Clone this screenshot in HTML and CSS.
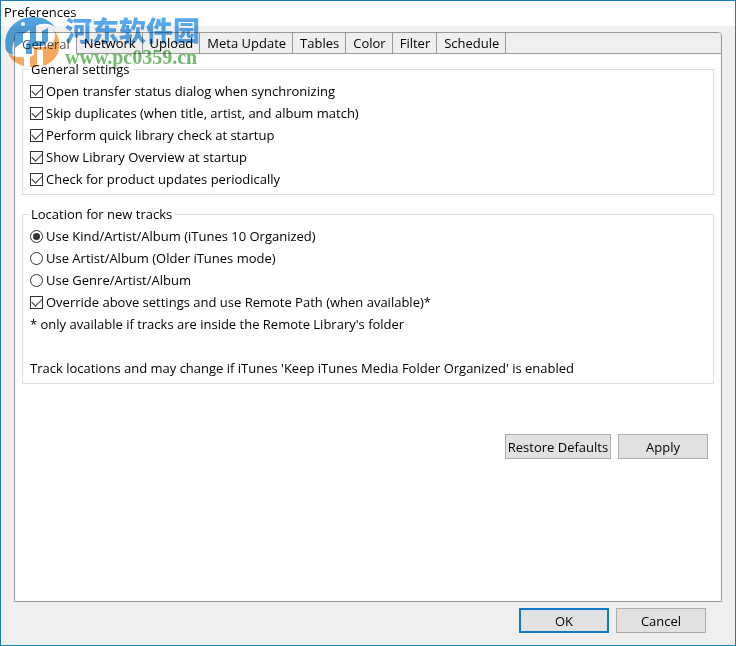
FILE: index.html
```html
<!DOCTYPE html>
<html lang="en">
<head>
    <meta charset="UTF-8">
    <title>Preferences</title>
    <link rel="stylesheet" href="styles.css">
</head>
<body>
    <form class="dialog">
        <header class="title-bar">Preferences</header>

        <div class="tab-panel">
            <div class="tabs" role="tablist">
                <button type="button" class="tab active" role="tab" aria-selected="true">General</button>
                <button type="button" class="tab" role="tab">Network</button>
                <button type="button" class="tab" role="tab">Upload</button>
                <button type="button" class="tab" role="tab">Meta Update</button>
                <button type="button" class="tab" role="tab">Tables</button>
                <button type="button" class="tab" role="tab">Color</button>
                <button type="button" class="tab" role="tab">Filter</button>
                <button type="button" class="tab" role="tab">Schedule</button>
            </div>

            <div class="page" role="tabpanel">
                <fieldset>
                    <legend>General settings</legend>
                    <label class="row"><input type="checkbox" checked>Open transfer status dialog when synchronizing</label>
                    <label class="row"><input type="checkbox" checked>Skip duplicates (when title, artist, and album match)</label>
                    <label class="row"><input type="checkbox" checked>Perform quick library check at startup</label>
                    <label class="row"><input type="checkbox" checked>Show Library Overview at startup</label>
                    <label class="row"><input type="checkbox" checked>Check for product updates periodically</label>
                </fieldset>

                <fieldset>
                    <legend>Location for new tracks</legend>
                    <label class="row"><input type="radio" name="location" checked>Use Kind/Artist/Album (iTunes 10 Organized)</label>
                    <label class="row"><input type="radio" name="location">Use Artist/Album (Older iTunes mode)</label>
                    <label class="row"><input type="radio" name="location">Use Genre/Artist/Album</label>
                    <label class="row"><input type="checkbox" checked>Override above settings and use Remote Path (when available)*</label>
                    <p class="row">* only available if tracks are inside the Remote Library's folder</p>
                    <p class="row note">Track locations and may change if iTunes 'Keep iTunes Media Folder Organized' is enabled</p>
                </fieldset>

                <div class="page-buttons">
                    <button type="reset" class="btn restore">Restore Defaults</button>
                    <button type="button" class="btn">Apply</button>
                </div>
            </div>
        </div>

        <footer class="dialog-buttons">
            <button type="submit" class="btn default">OK</button>
            <button type="button" class="btn">Cancel</button>
        </footer>
    </form>

    <div class="watermark">
        <svg class="watermark-logo" viewBox="0 0 58 54" width="58" height="54">
            <path fill="#3f98da" d="M2 36 C-2 18 11 3 29 3 C39 3 47 7 51 13 C45 9 37 9 32 12 L32 27 L38 27 L38 17 L44 14 L44 27 L39 32 L28 32 L28 40 L22 40 L22 30 L26 27 L26 16 L19 20 L19 28 L11 34 L11 26 C8 31 8 36 9 41 C5 40 3 38 2 36 Z"/>
            <circle fill="#fff" cx="19" cy="10" r="2"/>
            <path fill="#f5a04c" d="M50 16 C60 28 56 47 39 52 L39 36 L33 36 L33 53 L26 53 L26 43 L30 41 L30 33 L45 33 C51 28 52 22 50 16 Z"/>
            <path fill="#f5a04c" d="M4 39 C9 43 14 44 20 43 L20 52 C12 50 7 46 4 39 Z"/>
        </svg>
        <div>
            <div class="watermark-name" lang="zh-CN">河东软件园</div>
            <div class="watermark-url">www.pc0359.cn</div>
        </div>
    </div>
</body>
</html>
```
FILE: styles.css
```css
* {
    box-sizing: border-box;
}

body {
    margin: 0;
    font-family: "Open Sans", "Noto Sans CJK SC", sans-serif;
    font-size: 13px;
    line-height: 20px;
    color: #000;
}

button {
    font: inherit;
    color: inherit;
}

.dialog {
    display: flex;
    flex-direction: column;
    min-height: 100vh;
    border: 1px solid #2079b8;
    background: #efefef;
}

.title-bar {
    height: 25px;
    padding: 1px 3px;
    background: #fff;
}

.tab-panel {
    flex: 1;
    display: flex;
    flex-direction: column;
    margin: 6px 13px 0;
    border: 1px solid #999;
    border-radius: 4px 4px 0 0;
    background: #fff;
    overflow: hidden;
}

.tabs {
    display: flex;
    height: 21px;
    background: #efefef;
    border-bottom: 1px solid #999;
}

.tab {
    height: 20px;
    padding: 0 6px 0 7px;
    border: 0;
    border-right: 1px solid #999;
    background: none;
    line-height: 20px;
}

.tab.active {
    height: 21px;
    background: #fff;
    color: #555;
}

.page {
    padding: 5px 7px;
}

fieldset {
    margin: 0 0 9px;
    padding: 1px 7px 4px;
    border: 1px solid #dcdcdc;
}

legend {
    padding: 0 2px;
    line-height: 20px;
    margin-left: -1px;
}

.row {
    display: flex;
    align-items: center;
    height: 22px;
    margin: 0;
}

.note {
    margin-top: 22px;
}

input {
    appearance: none;
    flex: none;
    display: grid;
    place-items: center;
    width: 13px;
    height: 13px;
    margin: 0 3px 0 0;
    border: 1px solid #333;
    background: #fff;
}

input[type="radio"] {
    border-radius: 50%;
}

input[type="radio"]:checked::before {
    content: "";
    width: 7px;
    height: 7px;
    border-radius: 50%;
    background: #333;
}

input[type="checkbox"]:checked::before {
    content: "";
    width: 9px;
    height: 5px;
    margin-bottom: 3px;
    border: solid #333;
    border-width: 0 0 1px 1px;
    transform: rotate(-45deg);
}

.page-buttons,
.dialog-buttons {
    display: flex;
    justify-content: flex-end;
    gap: 7px;
}

.page-buttons {
    padding: 41px 6px 0;
}

.dialog-buttons {
    padding: 6px 29px 12px;
}

.btn {
    width: 90px;
    height: 25px;
    padding: 0;
    border: 1px solid #adadad;
    background: #e1e1e1;
    white-space: nowrap;
}

.restore {
    width: 106px;
}

.default {
    border: 2px solid #0f78c8;
}

.watermark {
    position: absolute;
    top: 14px;
    left: 4px;
    display: flex;
    gap: 3px;
    pointer-events: none;
    opacity: 0.9;
    mix-blend-mode: multiply;
}

.watermark-name {
    font: 900 27px/32px "Noto Sans CJK SC", sans-serif;
    color: #459fec;
}

.watermark-url {
    font: bold 20px/22px "Liberation Serif", serif;
    color: #62b35c;
}
```
